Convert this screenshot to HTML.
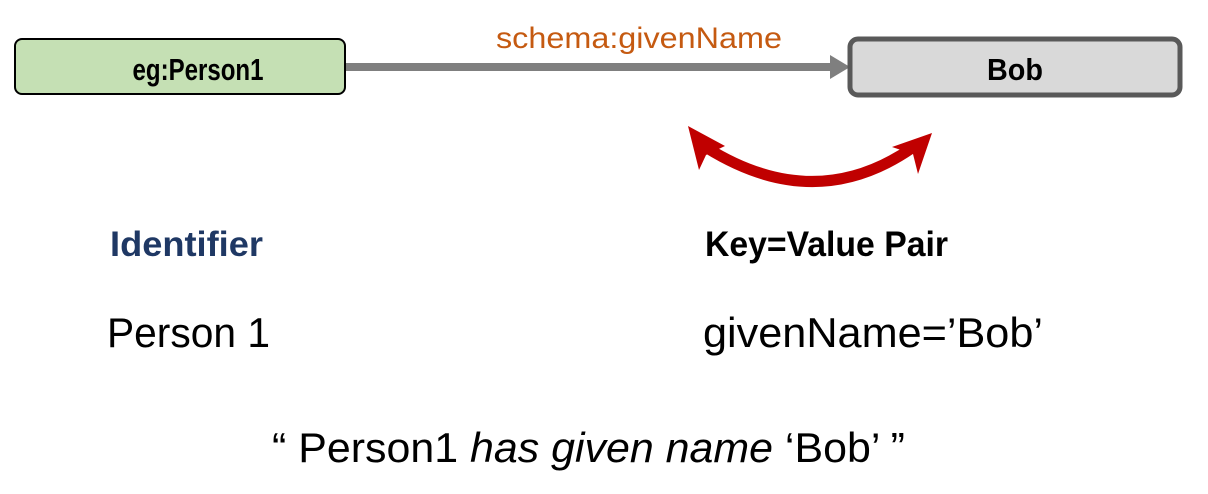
<!DOCTYPE html>
<html><head><meta charset="utf-8"><style>
html,body{margin:0;padding:0;background:#fff;width:1208px;height:494px;overflow:hidden}
svg{display:block}
text{font-family:"Liberation Sans",sans-serif}
</style></head><body>
<svg width="1208" height="494" viewBox="0 0 1208 494">
<rect x="15" y="39" width="330" height="55" rx="7" fill="#c5e0b4" stroke="#000" stroke-width="2"/>
<text x="198" y="80" text-anchor="middle" font-size="31" font-weight="bold" textLength="131" lengthAdjust="spacingAndGlyphs">eg:Person1</text>
<line x1="346" y1="67" x2="834" y2="67" stroke="#7f7f7f" stroke-width="8"/>
<polygon points="830,55 850,67 830,79" fill="#7f7f7f"/>
<text x="496" y="48" font-size="30" fill="#c55a11" textLength="286" lengthAdjust="spacingAndGlyphs">schema:givenName</text>
<rect x="850" y="39" width="330" height="56" rx="8" fill="#d9d9d9" stroke="#595959" stroke-width="5"/>
<text x="1015" y="80" text-anchor="middle" font-size="31" font-weight="bold" textLength="56" lengthAdjust="spacingAndGlyphs">Bob</text>
<path d="M707,148 Q815,215 912,148" fill="none" stroke="#c00000" stroke-width="11"/>
<polygon points="688,126 725,146 706,155 699,170" fill="#c00000"/>
<polygon points="932,133 918,174 913,154 892,147" fill="#c00000"/>
<text x="110" y="256" font-size="35" font-weight="bold" fill="#1f3864" textLength="153" lengthAdjust="spacingAndGlyphs">Identifier</text>
<text x="705" y="256" font-size="35" font-weight="bold" fill="#000" textLength="243" lengthAdjust="spacingAndGlyphs">Key=Value Pair</text>
<text x="107" y="347" font-size="42" fill="#000" textLength="163" lengthAdjust="spacingAndGlyphs">Person 1</text>
<text x="703" y="347" font-size="42" fill="#000" textLength="340" lengthAdjust="spacingAndGlyphs">givenName=’Bob’</text>
<text x="272" y="462" font-size="42" fill="#000" textLength="633" lengthAdjust="spacingAndGlyphs">“ Person1 <tspan font-style="italic">has given name</tspan> ‘Bob’ ”</text>
</svg>
</body></html>
